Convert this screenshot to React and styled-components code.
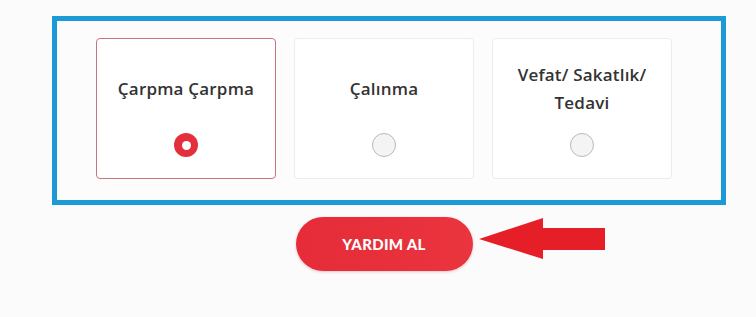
import styled, { createGlobalStyle } from 'styled-components'

const GlobalStyle = createGlobalStyle`
  body {
    margin: 0;
    background-color: #fbfbfb;
    font-family: 'Open Sans', 'Lato', sans-serif;
  }
`

const Page = styled.div`
  width: 756px;
  height: 317px;
  padding: 16px 0 0 52px;
  box-sizing: border-box;
`

const Highlight = styled.div`
  width: 674px;
  height: 189px;
  box-sizing: border-box;
  border: 5px solid #1b9ad6;
  background-color: #fcfcfc;
  padding: 17px 0 0 39px;
`

const CardRow = styled.div`
  display: flex;
  gap: 18px;
`

const Card = styled.div`
  width: 180px;
  height: 141px;
  box-sizing: border-box;
  background-color: #fff;
  border: 1px solid ${({ selected }) => (selected ? '#c87480' : '#ececec')};
  border-radius: 4px;
  display: flex;
  flex-direction: column;
  align-items: center;
  padding-top: 14px;
`

const CardTitle = styled.div`
  height: 72px;
  display: flex;
  align-items: center;
  justify-content: center;
  text-align: center;
  color: #333;
  font-size: 17px;
  font-weight: 600;
  letter-spacing: 0.2px;
  line-height: 28px;
  padding: 0 12px;
`

const Radio = styled.span`
  margin-top: 8px;
  width: 24px;
  height: 24px;
  box-sizing: border-box;
  border-radius: 50%;
  display: flex;
  align-items: center;
  justify-content: center;
  background-color: ${({ checked }) => (checked ? '#e3303c' : '#f4f4f4')};
  border: ${({ checked }) => (checked ? 'none' : '1px solid #b9b9b9')};
  &::after {
    content: '';
    display: ${({ checked }) => (checked ? 'block' : 'none')};
    width: 9px;
    height: 9px;
    border-radius: 50%;
    background-color: #fff;
  }
`

const ButtonRow = styled.div`
  margin: 12px 0 0 44px;
  width: 576px;
  display: flex;
  justify-content: center;
`

const ButtonWrap = styled.div`
  position: relative;
`

const HelpButton = styled.button`
  width: 177px;
  height: 54px;
  border: none;
  border-radius: 27px;
  background: linear-gradient(90deg, #e52c38, #ea343e);
  box-shadow: 0 1px 3px rgba(180, 30, 40, 0.25);
  color: #fff;
  font-family: 'Lato', sans-serif;
  font-size: 15px;
  font-weight: 900;
  letter-spacing: 0.3px;
  cursor: pointer;
`

const Arrow = styled.svg`
  position: absolute;
  left: 182px;
  top: 1px;
`

const options = [
  { label: 'Çarpma Çarpma', selected: true },
  { label: 'Çalınma', selected: false },
  { label: 'Vefat/ Sakatlık/ Tedavi', selected: false },
]

function App() {
  return (
    <>
      <GlobalStyle />
      <Page>
        <Highlight>
          <CardRow>
            {options.map((o) => (
              <Card key={o.label} selected={o.selected}>
                <CardTitle>{o.label}</CardTitle>
                <Radio checked={o.selected} />
              </Card>
            ))}
          </CardRow>
        </Highlight>
        <ButtonRow>
          <ButtonWrap>
            <HelpButton>YARDIM AL</HelpButton>
            <Arrow width="128" height="42" viewBox="0 0 128 42">
              <polygon
                points="1,21 65,0 65,10 127,10 127,32 65,32 65,41"
                fill="#e61e28"
              />
            </Arrow>
          </ButtonWrap>
        </ButtonRow>
      </Page>
    </>
  )
}

export default App
